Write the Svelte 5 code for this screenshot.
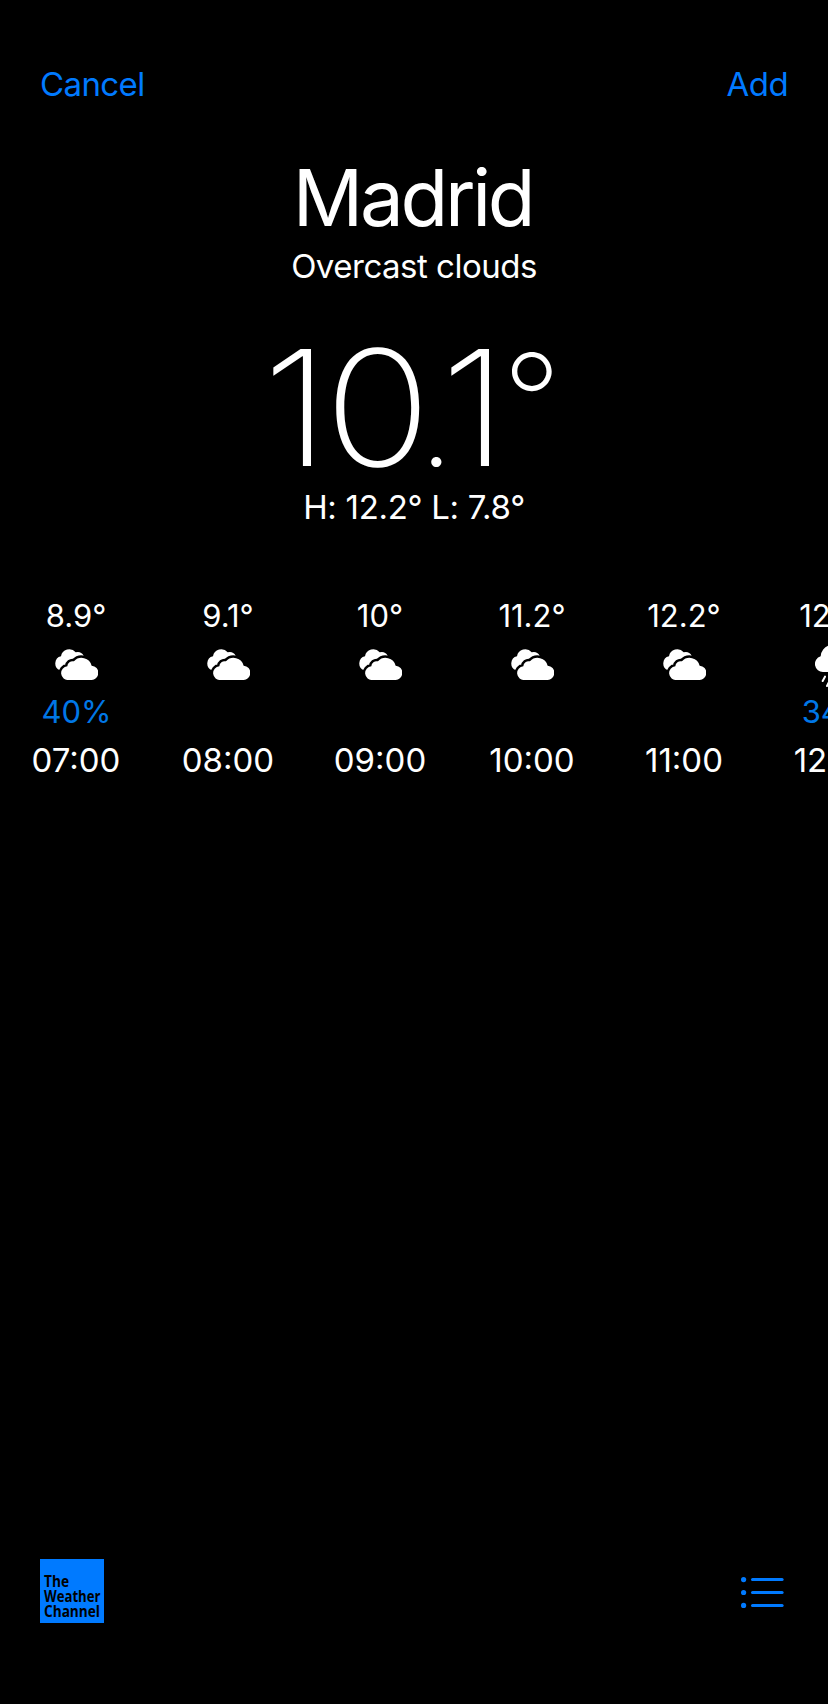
<script>
  const hours = [
    { temp: '8.9°', rain: '40%', time: '07:00', icon: 'clouds' },
    { temp: '9.1°', rain: '', time: '08:00', icon: 'clouds' },
    { temp: '10°', rain: '', time: '09:00', icon: 'clouds' },
    { temp: '11.2°', rain: '', time: '10:00', icon: 'clouds' },
    { temp: '12.2°', rain: '', time: '11:00', icon: 'clouds' },
    { temp: '12.2°', rain: '34%', time: '12:00', icon: 'rain' }
  ];
</script>

<main class="screen">
  <header class="bar">
    <button>Cancel</button>
    <button class="add">Add</button>
  </header>

  <section class="summary">
    <h1>Madrid</h1>
    <p class="condition">Overcast clouds</p>
    <p class="current"><span class="digit one">1</span><span class="digit zero">0</span><span class="dot">.</span><span class="digit">1</span><span class="degree">°</span></p>
    <p class="range">H: 12.2° L: 7.8°</p>
  </section>

  <section class="hourly">
    {#each hours as hour}
      <div class="hour">
        <span class="temp">{hour.temp}</span>
        <span class="icon">
          {#if hour.icon === 'clouds'}
            <svg width="43" height="31" viewBox="0 0 129 93">
              <path fill="#fff" d="M15 64A22 22 0 0 1 18 22A25 25 0 0 1 62 10Q78 6 86 20L70 60Z" />
              <path class="front" d="M41 93A20.5 20.5 0 0 1 37 52A16 16 0 0 1 57 37A31 31 0 0 1 110 50A21.5 21.5 0 0 1 107 93Z" />
            </svg>
          {:else}
            <svg class="shower" width="43" height="45" viewBox="0 0 129 135">
              <path fill="#fff" d="M25 84A24 24 0 0 1 17 37A35 35 0 0 1 82 20A32 32 0 0 1 98 84Z" />
              <path class="drops" d="M30 98L23 111M50 98L36 126M70 98L63 111M90 98L76 126" />
            </svg>
          {/if}
        </span>
        <span class="rain">{hour.rain}</span>
        <span class="time">{hour.time}</span>
      </div>
    {/each}
  </section>

  <footer class="foot">
    <svg width="64" height="64" viewBox="0 0 64 64" class="logo">
      <rect width="64" height="64" fill="#007aff" />
      <text x="4" y="28" textLength="25" lengthAdjust="spacingAndGlyphs">The</text>
      <text x="4" y="43" textLength="56.5" lengthAdjust="spacingAndGlyphs">Weather</text>
      <text x="4" y="58" textLength="56" lengthAdjust="spacingAndGlyphs">Channel</text>
    </svg>
    <svg class="list" width="43" height="32" viewBox="0 0 43 32" fill="#007aff">
      <circle cx="2.6" cy="3.6" r="2.6" /><circle cx="2.6" cy="16.5" r="2.6" /><circle cx="2.6" cy="29.4" r="2.6" />
      <rect x="10" y="2" width="32.6" height="3" rx="1.5" /><rect x="10" y="15" width="32.6" height="3" rx="1.5" /><rect x="10" y="28" width="32.6" height="3" rx="1.5" />
    </svg>
  </footer>
</main>

<style>
  :global(body) { background: #000; }
  .screen {
    box-sizing: border-box;
    width: 828px;
    height: 1704px;
    overflow: hidden;
    background: #000;
    color: #fff;
    font-family: Inter, "Liberation Sans", sans-serif;
    font-size: 33px;
    display: flex;
    flex-direction: column;
  }
  .bar {
    display: flex;
    justify-content: space-between;
    padding: 64px 40px 0 40px;
    height: 40px;
  }
  button {
    border: 0;
    padding: 0;
    background: none;
    color: #007aff;
    font: inherit;
    line-height: 40px;
    letter-spacing: -0.6px;
  }
  h1, p { margin: 0; font-weight: 400; white-space: nowrap; }
  .summary {
    display: flex;
    flex-direction: column;
    align-items: center;
    padding-top: 44px;
  }
  h1 { font-size: 78px; line-height: 100px; letter-spacing: -3.3px; margin-right: 3px; }
  .condition { line-height: 40px; letter-spacing: -0.5px; margin-top: -2px; }
  .current {
    display: flex;
    align-items: baseline;
    height: 180px;
    font-size: 161px;
    line-height: 180px;
    font-weight: 170;
    margin: 32px 6px 0 0;
    letter-spacing: -4px;
  }
  .digit { transform: scaleX(1.1); }
  .one { margin-right: 7px; }
  .zero { margin-right: -4px; }
  .dot { font-size: 129px; line-height: 100px; margin-right: -7px; font-weight: 200; }
  .degree { font-size: 129px; line-height: 100px; margin-left: 2px; font-weight: 250; transform: translateY(-19px); }
  .range { line-height: 40px; margin-top: -11px; letter-spacing: -0.3px; }
  .hourly { display: flex; margin-top: 65px; }
  .hour {
    flex: 0 0 152px;
    display: grid;
    grid-template-rows: 44px 52px 48px 48px;
    justify-items: center;
    line-height: 48px;
  }
  .temp, .rain { font-size: 31px; }
  .rain { color: #0077e6; padding-left: 1px; }
  .icon { display: flex; align-items: flex-start; padding-top: 13px; height: 39px; }
  .shower { margin-top: -5px; }
  .front { fill: #fff; stroke: #000; stroke-width: 15; paint-order: stroke; }
  .drops { stroke: #fff; stroke-width: 6; stroke-linecap: round; }
  .foot {
    margin-top: auto;
    padding: 0 44px 81px 40px;
    display: flex;
    justify-content: space-between;
    align-items: center;
  }
  .list { margin-top: 2px; }
  .logo text { font: 700 15.5px "Open Sans", "Noto Sans", sans-serif; fill: #000; }
</style>
